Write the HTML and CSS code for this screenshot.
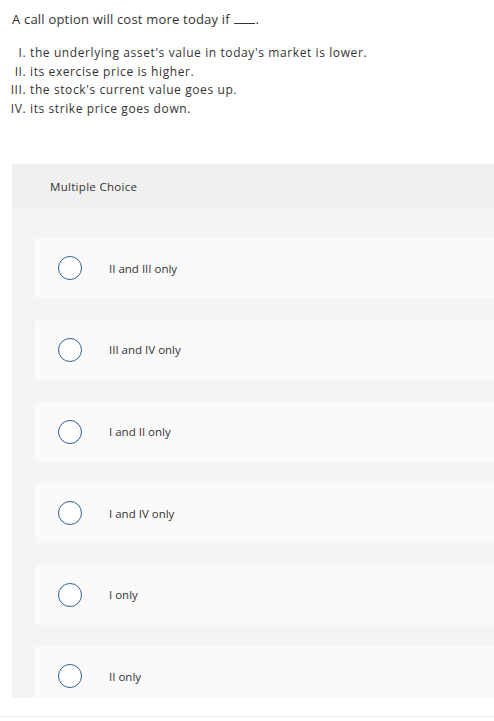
FILE: index.html
```html
<!DOCTYPE html>
<html>
<head>
<meta charset="utf-8">
<link rel="stylesheet" href="styles.css">
</head>
<body>
<div class="question">
  <p class="prompt">A call option will cost more today if <span class="blank"></span>.</p>
  <ol class="items">
    <li>the underlying asset's value in today's market is lower.</li>
    <li>its exercise price is higher.</li>
    <li>the stock's current value goes up.</li>
    <li>its strike price goes down.</li>
  </ol>
</div>
<div class="panel">
  <div class="panel-head">Multiple Choice</div>
  <div class="panel-body">
    <div class="option"><span class="radio"></span><span class="label">II and III only</span></div>
    <div class="option"><span class="radio"></span><span class="label">III and IV only</span></div>
    <div class="option"><span class="radio"></span><span class="label">I and II only</span></div>
    <div class="option"><span class="radio"></span><span class="label">I and IV only</span></div>
    <div class="option"><span class="radio"></span><span class="label">I only</span></div>
    <div class="option"><span class="radio"></span><span class="label">II only</span></div>
  </div>
</div>
<div class="rule"></div>
</body>
</html>
```
FILE: styles.css
```css
html, body {
  margin: 0;
  padding: 0;
  background: #fff;
}
body {
  font-family: "Open Sans", "Liberation Sans", sans-serif;
  color: #333;
  overflow: hidden;
}
.question {
  padding: 11px 12px 0 12px;
}
.prompt {
  margin: 0;
  font-size: 13px;
  letter-spacing: 0.2px;
  line-height: 16px;
}
.blank {
  display: inline-block;
  width: 21px;
  border-bottom: 1px solid #333;
  vertical-align: baseline;
  margin-left: 1px;
}
.items {
  list-style: upper-roman;
  margin: 17px 0 0 0;
  padding-left: 18px;
  font-size: 12px;
  letter-spacing: 0.6px;
  line-height: 18.6px;
}
.panel {
  margin: 46px 0 0 12px;
}
.panel-head {
  background: #f0f0f0;
  height: 45px;
  display: flex;
  align-items: center;
  padding-left: 38px;
  font-size: 11.5px;
  letter-spacing: 0.3px;
}
.panel-body {
  background: #f4f4f4;
  padding: 29px 0 0 23px;
  height: 460px;
  overflow: hidden;
  display: flex;
  flex-direction: column;
  gap: 21.6px;
}
.option {
  flex: none;
  background: #fafafa;
  border-radius: 3px 0 0 3px;
  height: 60px;
  display: flex;
  align-items: center;
  padding-left: 23px;
}
.radio {
  width: 22px;
  height: 22px;
  border: 1.5px solid #2e5e8e;
  border-radius: 50%;
  background: #fff;
  flex: none;
}
.label {
  margin-left: 27px;
  font-size: 11.5px;
}
.rule {
  margin-top: 18px;
  height: 1px;
  background: #ececec;
}
```
